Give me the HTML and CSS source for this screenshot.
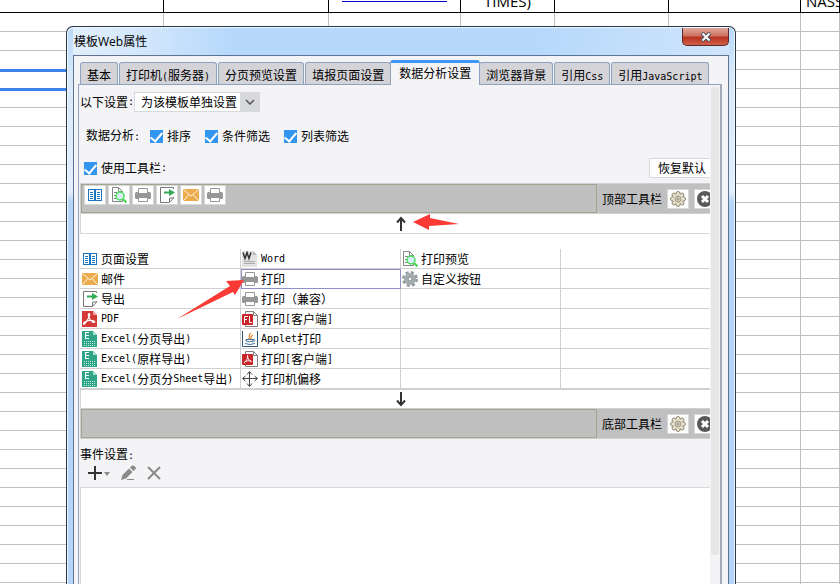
FILE: index.html
```html
<!DOCTYPE html>
<html lang="zh-CN">

<head>
  <meta charset="UTF-8">
  <title>模板Web属性</title>
  <meta name="viewport" content="width=device-width, initial-scale=1">
  <link rel="stylesheet" href="styles.css">
</head>

<body>

  <!-- Icons -->
  <svg class="sprite" aria-hidden="true">
    <symbol id="i-page" viewBox="0 0 16 16">
      <path d="M1.500 2.500h13v11h-13z" fill="#fff" stroke="#1c75bc" />
      <path d="M1 2.500h14M1 13.500h14M7.500 2v12M8.500 2v12" stroke="#1c75bc" />
      <path d="M3 5.500h3M3 7.500h3M3 9.500h3M3 11.500h3M10 5.500h3M10 7.500h3M10 9.500h3M10 11.500h3" stroke="#1c75bc" />
    </symbol>
    <symbol id="i-preview" viewBox="0 0 16 16">
      <path d="M1.500 14.500v-14h6l4 4v10z" fill="#fff" stroke="#848484" />
      <path d="M7.500 .5v4h4M3 5.500h3M3 8.500h2M3 11.500h3" fill="none" stroke="#848484" />
      <path d="M12 12l3.500 3.500" stroke="#3fd84f" stroke-width="2" />
      <circle cx="9" cy="9" r="4" fill="#d8ecfa" stroke="#4ade5a" stroke-width="1.500" />
    </symbol>
    <symbol id="i-print" viewBox="0 0 16 16">
      <rect x="0" y="5" width="16" height="7" rx="1.500" fill="#969696" />
      <path d="M3.500 6.500v-5h9v5zM3.500 10.500h9v4h-9z" fill="#fff" stroke="#969696" />
    </symbol>
    <symbol id="i-export" viewBox="0 0 16 16">
      <path d="M14.500 10v1l-4 4.500h-9V.5h13V2" fill="#fff" stroke="#777" />
      <path d="M10.500 15v-4h4" fill="none" stroke="#777" />
      <path d="M5 4.500h5V2l6 3.500L10 9V6.500H5z" fill="#34a853" />
    </symbol>
    <symbol id="i-mail" viewBox="0 0 16 16">
      <rect y="2" width="16" height="12" rx="1" fill="#ecac4e" />
      <path d="M.5 2.500L8 9l7.500-6.500M.5 13.500L6 7.500M15.500 13.500L10 7.500" fill="none" stroke="#fff6e4" />
    </symbol>
    <symbol id="i-pdf" viewBox="0 0 16 16">
      <path d="M0 0h11l4 4v12H0z" fill="#d33a37" />
      <path d="M11 0v4h4z" fill="#f2a7a3" />
      <path d="M7 2.500c2 0 0 5-4.500 10.500-1.500 1-1.500-1.500 1-2.500s6-1.500 8.500-.5c2 1.500-.5 2-2.500 0C7 8 5.500 3 7 2.500z" fill="none" stroke="#fff" stroke-width="1.200" />
    </symbol>
    <symbol id="i-excel" viewBox="0 0 16 16">
      <path d="M0 0h11l4 4v12H0z" fill="#2fa588" />
      <path d="M11 0v4h4z" fill="#a8e0cf" />
      <path d="M3 1.500h4M3 4.500h4M3 7.500h4M3.500 1v7" stroke="#fff" />
      <path d="M2 10.500h11M2 12.500h11M2 14.500h11" stroke="#bfe9dc" stroke-dasharray="1 1" />
    </symbol>
    <symbol id="i-word" viewBox="0 0 16 16">
      <path d="M0 0h11l4 4v12H0z" fill="#e2e2e2" />
      <path d="M11 0v4h4z" fill="#b5b5b5" />
      <path d="M1 1.500l2 6 2-6 2 6 2-6" fill="none" stroke="#333" stroke-width="1.500" />
      <path d="M2 10.500h11M2 12.500h11" stroke="#aaa" />
    </symbol>
    <symbol id="i-flash" viewBox="0 0 16 16">
      <path d="M3.500 15.500V.5h8l4 4v11z" fill="#fff" stroke="#808080" />
      <path d="M11.500 .5v4h4" fill="none" stroke="#808080" />
      <rect y="3" width="11" height="11" rx="1" fill="#c9252b" />
      <path d="M2.500 12V5.500H6M2.500 8.500H5M7.500 5v6.500H10" fill="none" stroke="#fff" />
    </symbol>
    <symbol id="i-java" viewBox="0 0 16 16">
      <path d="M.5 0v15.500h15V0" fill="#fff" stroke="#2f5673" />
      <path d="M9 2C5 4.500 9.500 5 6.500 8M11 4c-3 1-1 2-2.500 4" fill="none" stroke="#e8862e" stroke-width="1.300" />
      <path d="M4 8.500h7v1.500q-3.500 1.500-7 0zM11 8.500c3-.5 2 2.500-.5 2.500M3 12.500q5 2 10 0" fill="none" stroke="#47729a" />
    </symbol>
    <symbol id="i-pdfc" viewBox="0 0 16 16">
      <path d="M3.500 15.500V.5h8l4 4v11z" fill="#fff" stroke="#808080" />
      <path d="M11.500 .5v4h4" fill="none" stroke="#808080" />
      <rect y="3" width="11" height="11" rx="1" fill="#c9252b" />
      <path d="M5.500 4.500C6.500 7 4 10 2 12c1-2 5-3 7.500-1.500C7 9.500 5 7 5.500 4.500z" fill="none" stroke="#fff" />
    </symbol>
    <symbol id="i-move" viewBox="0 0 16 16">
      <path d="M7.500 1v14M1 7.500h14" stroke="#444" />
      <path d="M5 3.500L7.500 .5 10 3.500M5 12.500l2.500 3 2.500-3M3.500 5L.5 7.500l3 2.500M12.500 5l3 2.500-3 2.500" fill="none" stroke="#444" />
    </symbol>
    <symbol id="i-gear" viewBox="0 0 16 16">
      <circle cx="8" cy="8" r="6.500" fill="none" stroke="#929c9c" stroke-width="3" stroke-dasharray="3 2.100" />
      <circle cx="8" cy="8" r="4" fill="none" stroke="#a3adad" stroke-width="4" />
      <circle cx="8" cy="8" r="2" fill="#f4f6f6" stroke="#848e8e" />
    </symbol>
    <symbol id="i-flower" viewBox="0 0 16 16">
      <g fill="#e6e1cf" stroke="#8f8871">
        <circle cx="8" cy="2.500" r="2" />
        <circle cx="12" cy="4" r="2" />
        <circle cx="13.500" cy="8" r="2" />
        <circle cx="12" cy="12" r="2" />
        <circle cx="8" cy="13.500" r="2" />
        <circle cx="4" cy="12" r="2" />
        <circle cx="2.500" cy="8" r="2" />
        <circle cx="4" cy="4" r="2" />
      </g>
      <circle cx="8" cy="8" r="5" fill="#e6e1cf" />
      <circle cx="8" cy="8" r="3" fill="#d6d0ba" stroke="#a19a84" />
      <circle cx="8" cy="8" r="1" fill="#fff" stroke="#8f8b80" />
    </symbol>
    <symbol id="i-remove" viewBox="0 0 16 16">
      <circle cx="8" cy="8" r="8" fill="#595959" />
      <path d="M5 5l6 6M11 5l-6 6" stroke="#fff" stroke-width="3" />
    </symbol>
    <symbol id="i-up" viewBox="0 0 16 16">
      <path d="M8 15V3M4 6.500L8 2l4 4.500" fill="none" stroke="#333" stroke-width="2" />
    </symbol>
    <symbol id="i-down" viewBox="0 0 16 16">
      <path d="M8 1v12M4 9.500L8 14l4-4.500" fill="none" stroke="#333" stroke-width="2" />
    </symbol>
    <symbol id="i-pencil" viewBox="0 0 16 16">
      <path d="M1 15l1.500-5L9 3.500l3.500 3.500L6 13.500zM10 2.500L12 .5q1.500-.5 3 1t.5 2.500l-2 2z" fill="#8a8a8a" />
      <path d="M7 14.500h7" stroke="#8a8a8a" />
    </symbol>
  </svg>

  <!-- Spreadsheet behind the dialog -->
  <table class="sheet" id="sheet">
    <colgroup>
      <col class="c1"><col class="c2"><col class="c3"><col class="c4"><col class="c5"><col class="c6"><col>
    </colgroup>
    <tr class="head">
      <td></td>
      <td></td>
      <td><div class="cut"><span class="underline"></span></div></td>
      <td><div class="cut">TIMES)</div></td>
      <td></td>
      <td></td>
      <td><div class="cut start">NASS</div></td>
    </tr>
  </table>

  <!-- Dialog -->
  <div class="dialog">
    <div class="titlebar">
      <span>模板Web属性</span>
      <button class="close" aria-label="关闭">
        <svg width="12" height="10" viewBox="0 0 12 10"><path d="M2 1l8 8M10 1L2 9" stroke="#4b4f63" stroke-width="4" /><path d="M2.500 1.500l7 7M9.500 1.500l-7 7" stroke="#fff" stroke-width="2" /></svg>
      </button>
    </div>

    <div class="client">
      <div class="tabs">
        <button>基本</button>
        <button>打印机<i>(</i>服务器<i>)</i></button>
        <button>分页预览设置</button>
        <button>填报页面设置</button>
        <button class="active">数据分析设置</button>
        <button>浏览器背景</button>
        <button>引用<i>Css</i></button>
        <button>引用<i>JavaScript</i></button>
      </div>

      <div class="panel">
        <div class="view">
          <div class="content">

            <div class="row">
              <label for="scope">以下设置<i>:</i></label>
              <div class="combo">
                <select id="scope">
                  <option>为该模板单独设置</option>
                </select>
                <span class="combo-arrow"><svg width="10" height="6" viewBox="0 0 10 6"><path d="M1 1l4 4 4-4" fill="none" stroke="#555" stroke-width="1.500" /></svg></span>
              </div>
            </div>

            <div class="row analysis">
              <span>数据分析<i>:</i></span>
              <label><input type="checkbox" checked>排序</label>
              <label><input type="checkbox" checked>条件筛选</label>
              <label><input type="checkbox" checked>列表筛选</label>
            </div>

            <div class="row use">
              <label><input type="checkbox" checked>使用工具栏<i>:</i></label>
              <button class="restore">恢复默认</button>
            </div>

            <div class="toolbar">
              <div class="tools">
                <button aria-label="页面设置"><svg><use href="#i-page" /></svg></button>
                <button aria-label="打印预览"><svg><use href="#i-preview" /></svg></button>
                <button aria-label="打印"><svg><use href="#i-print" /></svg></button>
                <button aria-label="导出"><svg><use href="#i-export" /></svg></button>
                <button aria-label="邮件"><svg><use href="#i-mail" /></svg></button>
                <button aria-label="打印"><svg><use href="#i-print" /></svg></button>
              </div>
              <span>顶部工具栏</span>
              <button aria-label="设置"><svg><use href="#i-flower" /></svg></button>
              <button aria-label="清除"><svg><use href="#i-remove" /></svg></button>
            </div>

            <div class="strip top"><svg><use href="#i-up" /></svg></div>

            <table class="items">
              <colgroup>
                <col class="first"><col class="mid"><col class="mid"><col>
              </colgroup>
              <tr>
                <td><div><svg><use href="#i-page" /></svg>页面设置</div></td>
                <td><div><svg><use href="#i-word" /></svg><i>Word</i></div></td>
                <td><div><svg><use href="#i-preview" /></svg>打印预览</div></td>
                <td></td>
              </tr>
              <tr>
                <td><div><svg><use href="#i-mail" /></svg>邮件</div></td>
                <td class="selected"><div><svg><use href="#i-print" /></svg>打印</div></td>
                <td><div><svg><use href="#i-gear" /></svg>自定义按钮</div></td>
                <td></td>
              </tr>
              <tr>
                <td><div><svg><use href="#i-export" /></svg>导出</div></td>
                <td><div><svg><use href="#i-print" /></svg>打印（兼容）</div></td>
                <td></td>
                <td></td>
              </tr>
              <tr>
                <td><div><svg><use href="#i-pdf" /></svg><i>PDF</i></div></td>
                <td><div><svg><use href="#i-flash" /></svg>打印<i>[</i>客户端<i>]</i></div></td>
                <td></td>
                <td></td>
              </tr>
              <tr>
                <td><div><svg><use href="#i-excel" /></svg><i>Excel(</i>分页导出<i>)</i></div></td>
                <td><div><svg><use href="#i-java" /></svg><i>Applet</i>打印</div></td>
                <td></td>
                <td></td>
              </tr>
              <tr>
                <td><div><svg><use href="#i-excel" /></svg><i>Excel(</i>原样导出<i>)</i></div></td>
                <td><div><svg><use href="#i-pdfc" /></svg>打印<i>[</i>客户端<i>]</i></div></td>
                <td></td>
                <td></td>
              </tr>
              <tr>
                <td><div><svg><use href="#i-excel" /></svg><i>Excel(</i>分页分<i>Sheet</i>导出<i>)</i></div></td>
                <td><div><svg><use href="#i-move" /></svg>打印机偏移</div></td>
                <td></td>
                <td></td>
              </tr>
            </table>

            <div class="strip"><svg><use href="#i-down" /></svg></div>

            <div class="toolbar">
              <div class="tools"></div>
              <span>底部工具栏</span>
              <button aria-label="设置"><svg><use href="#i-flower" /></svg></button>
              <button aria-label="清除"><svg><use href="#i-remove" /></svg></button>
            </div>

            <div class="events">
              <div>事件设置<i>:</i></div>
              <div class="event-tools">
                <button aria-label="添加"><svg class="add" viewBox="0 0 22 16"><path d="M0 8h14M7 1v14" stroke="#333" stroke-width="2" /><path d="M16 7h6l-3 4z" fill="#8a8a8a" /></svg></button>
                <button aria-label="编辑"><svg><use href="#i-pencil" /></svg></button>
                <button aria-label="删除"><svg viewBox="0 0 16 16"><path d="M2 2l12 12M14 2L2 14" stroke="#8a8a8a" stroke-width="2" /></svg></button>
              </div>
            </div>
            <div class="event-list"></div>

          </div>
        </div>
        <div class="scroll"><div class="thumb"></div></div>
      </div>
    </div>
  </div>

  <!-- Red pointers -->
  <svg class="pointers" viewBox="0 0 300 120" aria-hidden="true">
    <path d="M237 10l17-8v4l29 6-30 2v4z" />
    <path d="M1 107l53-33-4-5 18-1-9 15-2-3z" />
  </svg>

  <script>
    // fill the sheet with empty rows
    const sheet = document.getElementById('sheet');
    for (let r = 0; r < 31; r++) {
      const row = sheet.insertRow();
      for (let c = 0; c < 7; c++) {
        row.insertCell();
      }
      if (r === 2 || r === 3) {
        row.cells[0].classList.add('picked');
      }
    }
  </script>

</body>

</html>
```

FILE: styles.css
```css
* {
  box-sizing: border-box;
  margin: 0;
  padding: 0;
}

body {
  display: grid;
  grid-template-columns: minmax(0, 1fr);
  grid-template-rows: 100vh;
  height: 100vh;
  overflow: hidden;
  position: relative;
  background: #fff;
  color: #000;
  font: 12px/20px "Noto Sans CJK SC", sans-serif;
}

button,
select {
  font: inherit;
  color: inherit;
  border: none;
  background: none;
}

i {
  font-family: "DejaVu Sans Mono", monospace;
  font-size: 10px;
  font-style: normal;
}

svg {
  width: 16px;
  height: 16px;
  flex: none;
}

.sprite {
  position: absolute;
  width: 0;
  height: 0;
}

/* spreadsheet */
.sheet {
  grid-area: 1 / 1;
  align-self: start;
  width: 100%;
  table-layout: fixed;
  border-spacing: 0;
}

.sheet td {
  height: 19px;
  border-right: 1px solid #c0c0c0;
  border-bottom: 1px solid #c0c0c0;
}

.sheet .head td {
  height: 13px;
  border-color: #000;
}

.sheet .picked {
  border-bottom-color: #3b82e8;
  box-shadow: 0 2px #3b82e8;
}

.c1 {
  width: 164px;
}

.c2 {
  width: 165px;
}

.c3 {
  width: 132px;
}

.c4 {
  width: 94px;
}

.c5 {
  width: 114px;
}

.c6 {
  width: 132px;
}

.cut {
  display: flex;
  justify-content: center;
  align-items: flex-end;
  height: 12px;
  overflow: hidden;
  font: 15px/22px "Open Sans", sans-serif;
}

.cut.start {
  justify-content: flex-start;
  padding-left: 5px;
}

.underline {
  width: 80%;
  height: 11px;
  border-top: 1px solid #00c;
}

/* dialog frame */
.dialog {
  grid-area: 1 / 1;
  z-index: 1;
  display: flex;
  flex-direction: column;
  margin: 26px 104px 0 66px;
  padding: 0 6px;
  border: 1px solid #2a3644;
  border-bottom: none;
  border-radius: 7px 7px 0 0;
  background: linear-gradient(#b8d9fb, #d8e9fb 50px, #e2effc 165px, #b5d5f8 175px);
  box-shadow: inset 1px 1px #eef6fe, inset -1px 0 #eef6fe;
}

.titlebar {
  display: flex;
  justify-content: space-between;
  height: 27px;
  margin-top: 1px;
  padding-left: 1px;
  line-height: 27px;
  font-family: "Open Sans", "Noto Sans CJK SC", sans-serif;
  background: linear-gradient(90deg, #e2effc, #d0e5fb 80px, #b5d8fb 160px, #b5d8fb 460px, #d0e5fb);
}

.close {
  display: flex;
  justify-content: center;
  align-items: center;
  width: 47px;
  height: 18px;
  border: 1px solid #5c2a2a;
  border-top: none;
  border-radius: 0 0 5px 5px;
  background: linear-gradient(#e0a79b, #cf7160 8px, #b8321d 9px, #d0604a);
}

.close svg {
  width: 12px;
  height: 10px;
}

.client {
  flex: 1;
  min-height: 0;
  display: flex;
  flex-direction: column;
  border: 1px solid #5d7590;
  border-bottom: none;
  background: #f4f4f7;
}

/* tabs */
.tabs {
  display: flex;
  align-items: flex-end;
  gap: 1px;
  height: 28px;
  padding-left: 6px;
}

.tabs button {
  height: 22px;
  padding: 2px 6px 0;
  border: 1px solid #8fa3c0;
  border-bottom: none;
  border-radius: 3px 3px 0 0;
  background: #d4d3d8;
  white-space: nowrap;
}

.tabs .active {
  z-index: 1;
  height: 25px;
  margin: 0 -2px -1px;
  padding: 0 8px 2px;
  border-top: 3px solid #3d96f5;
  background: #f4f4f7;
}

/* tab page */
.panel {
  flex: 1;
  min-height: 0;
  display: flex;
  margin: 0 6px 0 4px;
  border: 1px solid #8fa3c0;
  border-right: 2px solid #a3acb8;
  border-bottom: none;
}

.view {
  flex: 1;
  min-width: 0;
  display: flex;
  overflow: hidden;
  padding-left: 1px;
}

/* the page is a little wider than the view */
.content {
  flex: 1 0 auto;
  width: calc(100% + 10px);
  display: flex;
  flex-direction: column;
  padding-top: 7px;
}

.scroll {
  width: 10px;
  padding: 2px 1px 0;
}

.thumb {
  height: 468px;
  border-radius: 3px;
  background: #e6e6e6;
}

.row {
  display: flex;
  align-items: center;
  height: 20px;
}

.row label {
  display: flex;
  align-items: center;
}

.combo {
  display: flex;
  height: 20px;
  border: 1px solid #d8d9dc;
}

.combo select {
  appearance: none;
  width: 105px;
  padding-left: 6px;
  background: #fff;
  line-height: 18px;
}

.combo-arrow {
  display: flex;
  justify-content: center;
  align-items: center;
  width: 19px;
  background: #d8d9dc;
}

.combo-arrow svg {
  width: 10px;
  height: 6px;
}

input[type="checkbox"] {
  appearance: none;
  display: flex;
  justify-content: center;
  width: 13px;
  height: 13px;
  margin-right: 4px;
  background: #3296f0;
}

input[type="checkbox"]:checked::after {
  content: "";
  width: 5px;
  height: 10px;
  border: solid #fff;
  border-width: 0 2px 2px 0;
  transform: rotate(40deg);
}

.analysis {
  gap: 14px;
  margin-top: 14px;
  padding-left: 6px;
}

.analysis span {
  margin-right: -4px;
}

.use {
  justify-content: space-between;
  margin-top: 12px;
  padding-left: 4px;
}

.restore {
  width: 71px;
  height: 20px;
  padding-left: 8px;
  border: 1px solid #d8d9dc;
  background: #fff;
  line-height: 18px;
  text-align: left;
}

/* toolbars */
.toolbar {
  display: flex;
  align-items: center;
  gap: 5px;
  height: 31px;
  padding-right: 4px;
  border: 1px solid #d0d0d0;
  border-right: none;
  background: #c0c0c0;
}

.use + .toolbar {
  margin-top: 5px;
}

.tools {
  flex: 1;
  display: flex;
  gap: 2px;
  height: 29px;
  padding-left: 2px;
  border: 1px solid #a3a394;
}

.toolbar button {
  display: flex;
  justify-content: center;
  align-items: center;
  width: 22px;
  height: 20px;
  border: 1px solid #d8d8d8;
  background: #fff;
}

.strip {
  display: flex;
  justify-content: center;
  align-items: center;
  height: 18px;
  border-left: 1px solid #d8d8d8;
  background: #fff;
}

.strip.top {
  height: 20px;
  border-bottom: 1px solid #d8d8d8;
}

/* button table */
.items {
  width: 100%;
  table-layout: fixed;
  border-spacing: 0;
  border-top: 15px solid #fff;
  border-bottom: 1px solid #d0d0d0;
  background: #fff;
}

.items td {
  height: 20px;
  border-right: 1px solid #d0d0d0;
  border-bottom: 1px solid #d0d0d0;
}

.items td:first-child {
  padding-left: 1px;
}

.items div {
  display: flex;
  align-items: center;
  height: 19px;
  padding-left: 1px;
  white-space: nowrap;
}

.items svg {
  margin-right: 3px;
}

.items .selected {
  outline: 1px solid #9090c8;
  outline-offset: -1px;
}

.first {
  width: 161px;
}

.mid {
  width: 160px;
}

/* events */
.events {
  padding-top: 5px;
  height: 48px;
  line-height: 19px;
}

.event-tools {
  display: flex;
  gap: 10px;
  padding-left: 8px;
}

.event-tools button {
  display: flex;
}

.event-tools .add {
  width: 22px;
}

.event-list {
  flex: 1;
  border: 1px solid #d8d8d8;
  border-bottom: none;
  background: #fff;
}

.pointers {
  position: absolute;
  z-index: 2;
  left: 176px;
  top: 212px;
  width: 300px;
  height: 120px;
  fill: #fb3a36;
  pointer-events: none;
}
```
